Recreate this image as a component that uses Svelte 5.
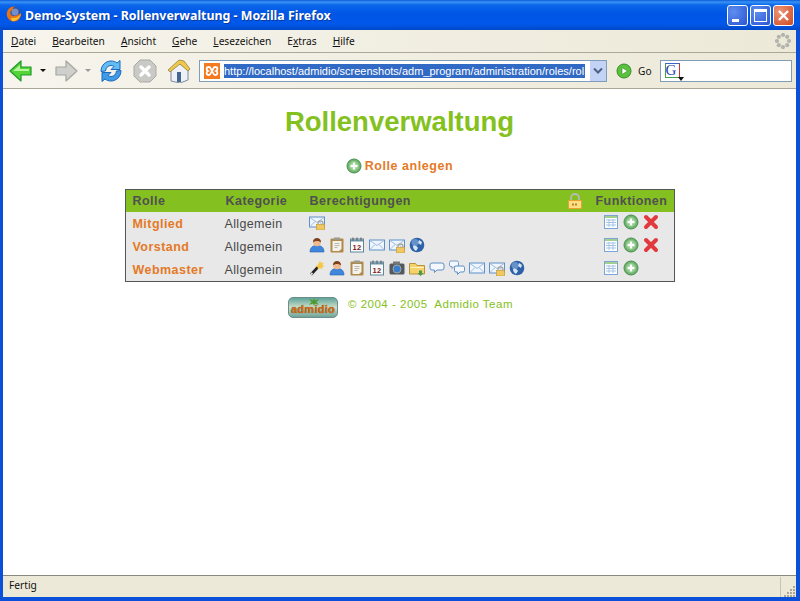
<script>
	const menus = [
		['D', 'atei'],
		['B', 'earbeiten'],
		['A', 'nsicht'],
		['G', 'ehe'],
		['L', 'esezeichen'],
		['', 'E', 'x', 'tras'],
		['H', 'ilfe']
	];

	const roles = [
		{ name: 'Mitglied', rights: ['maillock'], del: true },
		{
			name: 'Vorstand',
			rights: ['person', 'clip', 'cal', 'mail', 'maillock', 'globe'],
			del: true
		},
		{
			name: 'Webmaster',
			rights: ['wand', 'person', 'clip', 'cal', 'camera', 'folder', 'bubble', 'bubbles', 'mail', 'maillock', 'globe'],
			del: false
		}
	];
</script>

{#snippet plus()}
	<svg class="ic" viewBox="0 0 16 16">
		<circle cx="8" cy="8" r="7" fill="#6fb36f" stroke="#4b8f52" />
		<circle cx="8" cy="8" r="5" fill="#8fcb8a" />
		<path d="M8 4.500v7M4.500 8h7" stroke="#fff" stroke-width="2.400" />
	</svg>
{/snippet}

{#snippet cross()}
	<svg class="ic" viewBox="0 0 16 16">
		<path d="M3 3l10 10M13 3L3 13" stroke="#e03a3e" stroke-width="4" stroke-linecap="round" />
	</svg>
{/snippet}

{#snippet list()}
	<svg class="ic" viewBox="0 0 16 16">
		<rect x="1.500" y="1.500" width="13" height="13" fill="#fff" stroke="#7ba5d8" />
		<path d="M2 3h12" stroke="#8cc26f" stroke-width="1.600" />
		<path d="M3 6h10M3 8.500h10M3 11h10M6 5v8M10 5v8" stroke="#a5c2e6" />
	</svg>
{/snippet}

{#snippet lockShape(x, y)}
	<path d="M{x + 1.500} {y + 3}v-1a2.500 2.500 0 0 1 5 0v1" fill="none" stroke="#a8a8a0" stroke-width="1.300" />
	<rect x={x} y={y + 3} width="8" height="5.500" fill="#f0c860" stroke="#c99a3c" stroke-width=".7" />
{/snippet}

{#snippet mailShape()}
	<rect x=".5" y="3" width="15" height="10" fill="#eef5fd" stroke="#5f8fc8" />
	<path d="M1 3.500l7 5 7-5M1 12.500l5-5M15 12.500l-5-5" fill="none" stroke="#9dbde3" />
{/snippet}

{#snippet icon(name)}
	<svg class="ic" viewBox="0 0 16 16">
		{#if name === 'mail'}
			{@render mailShape()}
		{:else if name === 'maillock'}
			{@render mailShape()}
			{@render lockShape(7.500, 7.500)}
		{:else if name === 'person'}
			<path d="M1 15c0-5 3-6.500 7-6.500s7 1.500 7 6.500z" fill="#3f87dd" stroke="#2a62ad" stroke-width=".6" />
			<circle cx="8" cy="5.500" r="3.800" fill="#f0b98d" />
			<path d="M4 5.500c-.5-6 8.500-6 8 0-2-2-6-2-8 0z" fill="#7b3f1d" />
		{:else if name === 'clip'}
			<rect x="1.500" y="1.500" width="13" height="14" rx="1" fill="#b08a4a" />
			<path d="M3.500 4h9v8l-2.500 2H3.500z" fill="#f4f2ea" />
			<rect x="5" y=".5" width="6" height="2.500" fill="#9a9a90" />
			<path d="M5.500 6.500h5M5.500 8.500h5M5.500 10.500h3" stroke="#b8b8b0" />
		{:else if name === 'cal'}
			<rect x="1.500" y="2" width="13" height="13" fill="#fbfbfb" stroke="#5d8699" />
			<path d="M2 3.500h12" stroke="#6f97ab" stroke-width="2" />
			<path d="M4 .5v3M8 .5v3M12 .5v3" stroke="#555" />
			<text x="8" y="12.500" class="caltext">12</text>
		{:else if name === 'globe'}
			<circle cx="8" cy="8" r="7.300" fill="#2d62a8" />
			<circle cx="6" cy="5.500" r="3.500" fill="#7fa7d8" opacity=".7" />
			<path d="M4 9c2-1 4 0 5 2l-2 3c-2-1-3-3-3-5zM10 3l3 2-1 3-3-2z" fill="#d7e4f3" />
		{:else if name === 'wand'}
			<path d="M2 14.500L9 7" stroke="#222" stroke-width="2.600" />
			<path d="M11 .5l1 2.500 2.500-.5-1 2.500 2 1.500-2.500.5.5 2.500-2.500-1.500-2 1.500-.5-2.500-2-1 2.500-1z" fill="#f5c842" />
			<path d="M2 14.500l1.500-1.500" stroke="#ddd" stroke-width="2" />
		{:else if name === 'camera'}
			<rect x=".5" y="3.500" width="15" height="11" rx="1.500" fill="#55585c" />
			<rect x="4" y="1.500" width="7" height="3" fill="#777" />
			<circle cx="8" cy="9" r="4" fill="#3a7ecb" stroke="#9aa" />
		{:else if name === 'folder'}
			<path d="M.5 3.500h6l1.500 2h7.500v8.500H.5z" fill="#f5d36a" stroke="#b8923c" />
			<path d="M1.500 7h13v1h-13z" fill="#fff4c4" />
			<path d="M10 10.500h3v2.500h1.500l-3 3-3-3H10z" fill="#4a9c4a" />
		{:else if name === 'bubble'}
			<path d="M3 3h10q2 0 2 2v3q0 2-2 2H8l-2.500 2.500V10H3q-2 0-2-2V5q0-2 2-2z" fill="#f4f8fd" stroke="#5f8fc8" />
		{:else if name === 'bubbles'}
			<path d="M2 1h6q1.500 0 1.500 1.500V5q0 1.500-1.500 1.500H5l-2 2v-2H2Q.5 6.500.5 5V2.500Q.5 1 2 1z" fill="#f4f8fd" stroke="#7a9cc8" />
			<path d="M7 6h7q1.500 0 1.500 1.500v3q0 1.500-1.500 1.500h-3l-2.500 2.500V12H7q-1.500 0-1.500-1.500v-3Q5.500 6 7 6z" fill="#f4f8fd" stroke="#5f8fc8" />
		{/if}
	</svg>
{/snippet}

<div class="window">
	<header class="titlebar">
		<svg class="fox" viewBox="0 0 16 16">
			<circle cx="8" cy="8" r="7.500" fill="#34529e" />
			<circle cx="9" cy="6" r="3.500" fill="#6f8fd0" />
			<path d="M1 10C0 4 4 0 9 .5 7 1.500 6 3 7 4 4 4 4 7 5 9c2 2 6 1 10-2 0 5-3 8.500-7 8.500-3 0-6-2-7-5.500z" fill="#e8741a" />
			<path d="M6 15c4 .5 8-3 9-7-2 3-6 5-10 3.500z" fill="#f7c235" />
		</svg>
		<span class="title">Demo-System - Rollenverwaltung - Mozilla Firefox</span>
		<div class="winbtns">
			<div class="wb"><i class="min"></i></div>
			<div class="wb"><i class="max"></i></div>
			<div class="wb close">
				<svg viewBox="0 0 19 19"><path d="M5 5l9 9M14 5l-9 9" stroke="#fff" stroke-width="2.400" /></svg>
			</div>
		</div>
	</header>

	<nav class="menubar">
		{#each menus as m}
			<span class="menu">
				{#if m[0]}<u>{m[0]}</u>{m[1]}{:else}{m[1]}<u>{m[2]}</u>{m[3]}{/if}
			</span>
		{/each}
		<svg class="throbber" viewBox="0 0 16 16">
			{#each [[8, 2], [12.200, 3.800], [14, 8], [12.200, 12.200], [8, 14], [3.800, 12.200], [2, 8], [3.800, 3.800]] as p}
				<circle cx={p[0]} cy={p[1]} r="2.100" fill="#b4b4ae" />
			{/each}
		</svg>
	</nav>

	<div class="navbar">
		<svg class="tb back" viewBox="0 0 24 24">
			<path d="M1 12L12 2v6h10v8H12v6z" fill="#55d438" stroke="#1f9a2c" stroke-width="1.200" stroke-linejoin="round" />
			<path d="M4 12l7-6v4h9v2z" fill="#b8f5a0" />
		</svg>
		<span class="drop"></span>
		<svg class="tb forward" viewBox="0 0 24 24">
			<path d="M23 12L12 2v6H2v8h10v6z" fill="#cfcfcb" stroke="#a6a6a2" stroke-width="1.200" stroke-linejoin="round" />
		</svg>
		<span class="drop off"></span>
		<svg class="tb reload" viewBox="0 0 24 24">
			<path d="M2 12.500C2 6 7 2 12 2c2.500 0 4.500.7 6 2l3-2.500v9h-9l3-3c-1-.8-2-1-3-1-3 0-5 2-5.500 5.500z" fill="#63bcf3" stroke="#1a69bd" stroke-linejoin="round" />
			<path d="M22 11.500C22 18 17 22 12 22c-2.500 0-4.500-.7-6-2l-3 2.500v-9h9l-3 3c1 .8 2 1 3 1 3 0 5-2 5.500-5.500z" fill="#3f9be6" stroke="#1a69bd" stroke-linejoin="round" />
		</svg>
		<svg class="tb stop" viewBox="0 0 24 24">
			<path d="M7 1h10l6 6v10l-6 6H7l-6-6V7z" fill="#c9c9c5" stroke="#a9a9a5" />
			<path d="M8 8l8 8M16 8l-8 8" stroke="#fff" stroke-width="3.400" stroke-linecap="round" />
		</svg>
		<svg class="tb home" viewBox="0 0 24 24">
			<path d="M4 11v11l9 2 8-3V11L12 4z" fill="#eef1f7" stroke="#7f8a9a" />
			<path d="M1 11L12 1l5 1 6 8-2 2-8-7-10 8z" fill="#efc94c" stroke="#8a7430" stroke-width=".7" />
			<rect x="10" y="13" width="4" height="10" fill="#46678f" />
		</svg>

		<div class="urlbox">
			<span class="favicon">
				<svg viewBox="0 0 16 16"><path d="M5 4c-3 0-3 3-1 4-2 1-2 4 1 4 1.500 0 2-2 3-4 1 2 1.500 4 3 4 3 0 3-3 1-4 2-1 2-4-1-4-1.500 0-2 2-3 4-1-2-1.500-4-3-4z" fill="none" stroke="#fff" stroke-width="1.800" /></svg>
			</span>
			<div class="urltext"><span>http://localhost/admidio/screenshots/adm_program/administration/roles/rol</span></div>
			<span class="urldrop">
				<svg viewBox="0 0 10 8"><path d="M1 1.500l4 4 4-4" fill="none" stroke="#4d6185" stroke-width="2" /></svg>
			</span>
		</div>

		<svg class="go" viewBox="0 0 16 16">
			<circle cx="8" cy="8" r="7" fill="#5cc13c" stroke="#2f8f24" />
			<path d="M6 4.500v7l5.500-3.500z" fill="#fff" stroke="#2f8f24" stroke-width=".6" />
		</svg>
		<span class="gotext">Go</span>

		<div class="searchbox">
			<div class="gicon">
				<span class="g">G</span>
				<i class="gdrop"></i>
			</div>
		</div>
	</div>

	<main class="page">
		<h1>Rollenverwaltung</h1>
		<div class="newrole">
			{@render plus()}
			<span>Rolle anlegen</span>
		</div>

		<table>
			<thead>
				<tr>
					<th class="c1">Rolle</th>
					<th class="c2">Kategorie</th>
					<th class="c3">Berechtigungen</th>
					<th class="c4">
						<svg class="ic" viewBox="0 0 16 16">
							<path d="M4 8V5a4 4 0 0 1 8 0v3" fill="none" stroke="#b9b9b4" stroke-width="1.800" />
							<rect x="1.500" y="7.500" width="13" height="8" fill="#fddf86" stroke="#e8a32e" />
							<path d="M5 11.500h6" stroke="#b5822b" stroke-width="2" stroke-dasharray="2 1" />
						</svg>
					</th>
					<th class="c5">Funktionen</th>
				</tr>
			</thead>
			<tbody>
				{#each roles as role}
					<tr>
						<td class="rolename">{role.name}</td>
						<td>Allgemein</td>
						<td colspan="2">
							<div class="icons">
								{#each role.rights as r}
									{@render icon(r)}
								{/each}
							</div>
						</td>
						<td>
							<div class="icons funcs">
								{@render list()}
								{@render plus()}
								{#if role.del}{@render cross()}{/if}
							</div>
						</td>
					</tr>
				{/each}
			</tbody>
		</table>

		<footer>
			<div class="logo">
				<svg class="leaf" viewBox="0 0 12 8">
					<path d="M6 0l1 2.500L11 1 8.500 4 11 7 7 5.500 6 8 5 5.500 1 7l2.500-3L1 1l4 1.500z" fill="#4d9a2a" />
				</svg>
				<span>admidio</span>
			</div>
			<span class="copy">© 2004 - 2005&nbsp; Admidio Team</span>
		</footer>
	</main>

	<div class="statusbar">
		<span>Fertig</span>
		<div class="grip">
			<svg viewBox="0 0 12 12">
				{#each [[9, 1], [6, 4], [9, 4], [3, 7], [6, 7], [9, 7], [0, 10], [3, 10], [6, 10], [9, 10]] as d}
					<rect x={d[0]} y={d[1]} width="2" height="2" fill="#aca899" />
				{/each}
			</svg>
		</div>
	</div>
</div>

<style>
	:global(body) {
		margin: 0;
		background: #0a50d8;
	}

	.window {
		width: 800px;
		height: 601px;
		box-sizing: border-box;
		display: flex;
		flex-direction: column;
		overflow: hidden;
		padding: 0 4px 4px 3px;
		background: #0a50d8;
		font-family: "Noto Sans", sans-serif;
	}

	.titlebar {
		height: 30px;
		margin: 0 -4px 0 -3px;
		padding: 0 6px 0 6px;
		flex: none;
		display: flex;
		align-items: center;
		background: linear-gradient(#0a5bd8 0, #3a93f5 2px, #0a66ea 5px, #0055e5 14px, #0058ea 24px, #0048c8 30px);
		color: #fff;
	}

	.fox {
		width: 16px;
		height: 16px;
		margin-right: 3px;
		margin-top: -2px;
	}

	.title {
		font: bold 12.400px "Noto Sans", sans-serif;
		text-shadow: 1px 1px 0 #0a3a9a;
		white-space: nowrap;
	}

	.winbtns {
		margin-left: auto;
		display: flex;
		gap: 2px;
	}

	.wb {
		width: 19px;
		height: 19px;
		border: 1px solid #fff;
		border-radius: 3px;
		background: radial-gradient(circle at 30% 30%, #5f8ef0, #2a55d0);
		box-sizing: content-box;
		position: relative;
	}

	.wb i {
		position: absolute;
		display: block;
	}

	.min {
		left: 4px;
		top: 13px;
		width: 7px;
		height: 3px;
		background: #fff;
	}

	.max {
		left: 3px;
		top: 3px;
		width: 11px;
		height: 9px;
		border: 1px solid #fff;
		border-top-width: 3px;
	}

	.close {
		background: radial-gradient(circle at 30% 30%, #ee9478, #cc4a22);
	}

	.close svg {
		display: block;
	}

	.menubar {
		height: 22px;
		flex: none;
		display: flex;
		align-items: center;
		gap: 16px;
		padding-left: 8px;
		background: linear-gradient(90deg, #f6f4ec, #ece9d8);
		border-bottom: 1px solid #aca899;
		font-size: 10.200px;
		color: #111;
		position: relative;
	}

	.throbber {
		width: 16px;
		height: 16px;
		position: absolute;
		right: 5px;
		top: 3px;
	}

	.navbar {
		height: 35px;
		flex: none;
		display: flex;
		align-items: center;
		background: linear-gradient(90deg, #f6f4ec, #ece9d8);
		border-bottom: 1px solid #aca899;
		box-sizing: content-box;
	}

	.tb {
		flex: none;
		width: 24px;
		height: 24px;
	}

	.back {
		margin-left: 6px;
	}

	.forward {
		margin-left: 8px;
	}

	.reload {
		margin-left: 8px;
	}

	.stop {
		margin-left: 10px;
	}

	.home {
		margin-left: 10px;
	}

	.drop {
		margin-left: 7px;
		width: 0;
		height: 0;
		border: 3px solid transparent;
		border-top: 3px solid #111;
		border-bottom: 0;
	}

	.drop.off {
		border-top-color: #999;
	}

	.urlbox {
		margin-left: 8px;
		width: 408px;
		height: 22px;
		box-sizing: border-box;
		border: 1px solid #7f9db9;
		background: #fff;
		display: flex;
		align-items: center;
		flex: none;
	}

	.favicon {
		width: 16px;
		height: 16px;
		margin-left: 4px;
		background: #f47a20;
		flex: none;
	}

	.favicon svg {
		display: block;
	}

	.urltext {
		margin-left: 4px;
		flex: none;
		white-space: nowrap;
		font: 11px "Liberation Sans", sans-serif;
	}

	.urltext span {
		background: #316ac5;
		color: #fff;
		display: block;
		line-height: 14px;
		width: 361px;
	}

	.urldrop {
		margin-left: 5px;
		width: 16px;
		height: 20px;
		background: #c3d3f5;
		display: flex;
		align-items: center;
		justify-content: center;
		flex: none;
	}

	.urldrop svg {
		width: 10px;
		height: 8px;
	}

	.go {
		flex: none;
		width: 16px;
		height: 16px;
		margin-left: 9px;
	}

	.gotext {
		font-size: 10.200px;
		margin-left: 6px;
		color: #111;
	}

	.searchbox {
		margin-left: 8px;
		width: 132px;
		height: 22px;
		box-sizing: border-box;
		border: 1px solid #7f9db9;
		background: #fff;
		display: flex;
		align-items: center;
		padding-left: 4px;
		flex: none;
	}

	.gicon {
		width: 15px;
		height: 15px;
		border: 1px solid #4a9c4a;
		border-right-color: #c33;
		border-top-color: #3a62c8;
		position: relative;
		box-sizing: border-box;
	}

	.g {
		position: absolute;
		left: 0;
		top: -3px;
		font: 15px/18px "Liberation Serif", serif;
		color: #2244bb;
	}

	.gdrop {
		position: absolute;
		right: -5px;
		bottom: -4px;
		border: 3px solid transparent;
		border-top: 4px solid #111;
		border-bottom: 0;
	}

	.page {
		flex: 1;
		min-height: 0;
		background: #fff;
		display: flex;
		flex-direction: column;
		align-items: center;
		font-family: "Liberation Sans", sans-serif;
		border-bottom: 1px solid #8c8a7e;
	}

	h1 {
		margin: 15px 0 0;
		font-size: 27.500px;
		line-height: 36px;
		font-weight: bold;
		color: #84c120;
	}

	.newrole {
		margin-top: 16px;
		height: 20px;
		display: flex;
		align-items: center;
		gap: 3px;
		font-size: 12.500px;
		font-weight: bold;
		letter-spacing: 0.55px;
		color: #e47a27;
	}

	.ic {
		width: 16px;
		height: 16px;
		flex: none;
		display: block;
	}

	.caltext {
		font: bold 7.500px "Liberation Sans", sans-serif;
		fill: #7a1a1a;
		text-anchor: middle;
	}

	table {
		margin-top: 13px;
		width: 550px;
		table-layout: fixed;
		border-collapse: separate;
		border-spacing: 0;
		border: 1px solid #555;
		background: #e8e8e8;
		font-size: 12.500px;
		letter-spacing: 0.35px;
		color: #484848;
	}

	th {
		height: 22px;
		padding: 0 0 0 7px;
		background: #84c120;
		color: #505050;
		font-size: 12.500px;
		letter-spacing: 0.45px;
		font-weight: bold;
		text-align: left;
	}

	th.c4 {
		padding-left: 6px;
	}

	.c1 {
		width: 86px;
	}

	.c2 {
		width: 77px;
	}

	.c3 {
		width: 251px;
	}

	.c4 {
		width: 22px;
	}

	td {
		height: 23px;
		padding: 0 0 0 6px;
	}

	.rolename {
		padding-left: 7px;
		font-weight: bold;
		color: #e47a27;
		letter-spacing: 0.45px;
	}

	.icons {
		display: flex;
		gap: 4px;
		align-items: center;
		margin-top: -3px;
	}

	.funcs {
		padding-left: 8px;
	}

	footer {
		margin-top: 15px;
		padding-left: 2px;
		display: flex;
		align-items: flex-start;
		gap: 10px;
		font-size: 11.500px;
		letter-spacing: 0.5px;
		color: #84c120;
	}

	.copy {
		line-height: 14px;
	}

	.logo {
		width: 50px;
		height: 21px;
		box-sizing: border-box;
		border: 1px solid #6b8f86;
		border-radius: 5px;
		background: linear-gradient(#5fa39c, #cfe0c8 50%, #6fa39a);
		display: flex;
		align-items: flex-end;
		justify-content: center;
		position: relative;
	}

	.leaf {
		position: absolute;
		left: 19px;
		top: 0;
		width: 12px;
		height: 8px;
	}

	.logo span {
		font: bold 11px/15px "Liberation Sans", sans-serif;
		letter-spacing: 0.3px;
		color: #d8661c;
		text-shadow: 0 0 1px #3a5a20;
	}

	.statusbar {
		height: 21px;
		flex: none;
		display: flex;
		align-items: center;
		box-sizing: border-box;
		padding: 0 0 3px 6px;
		background: #ece9d8;
		font-size: 10.200px;
		color: #111;
		position: relative;
	}

	.grip {
		position: absolute;
		right: 0;
		top: 1px;
		width: 15px;
		height: 20px;
		border-left: 1px solid #c8c5b2;
	}

	.grip svg {
		position: absolute;
		right: 0;
		bottom: 0;
		width: 12px;
		height: 12px;
	}
</style>
